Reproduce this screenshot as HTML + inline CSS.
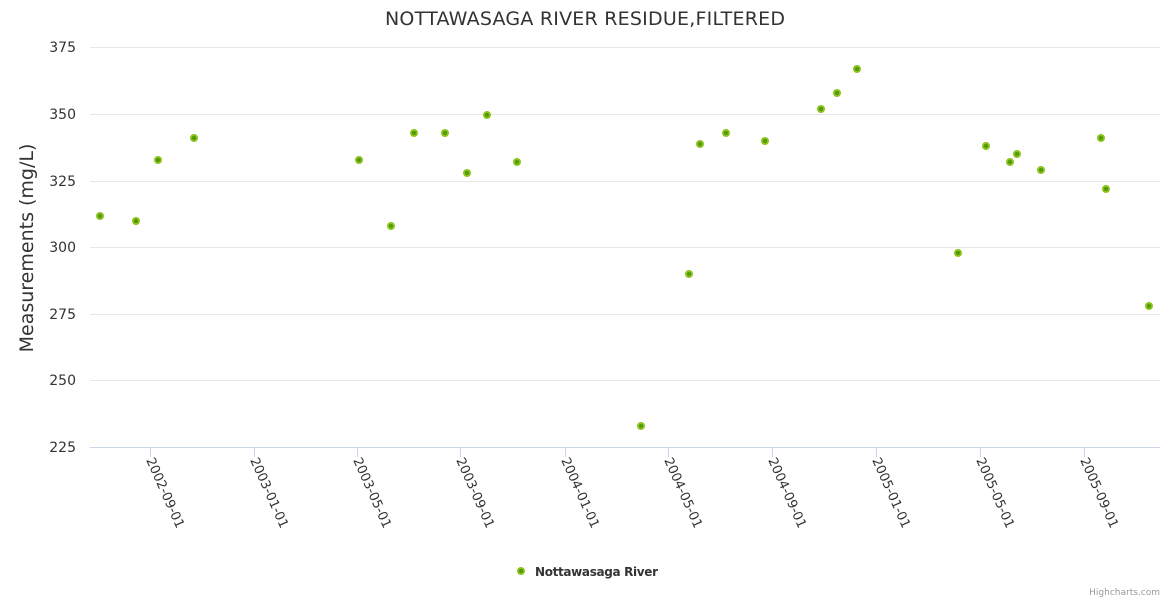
<!DOCTYPE html>
<html><head><meta charset="utf-8"><style>body{margin:0;background:#fff}svg{display:block}</style></head>
<body>
<svg width="1170" height="600" xmlns="http://www.w3.org/2000/svg" font-family="'DejaVu Sans','Liberation Sans',sans-serif">
<text x="585" y="25" text-anchor="middle" font-size="19" textLength="400" fill="#333">NOTTAWASAGA RIVER RESIDUE,FILTERED</text>
<g stroke="#e6e6e6" stroke-width="1">
<line x1="90" x2="1160" y1="47.5" y2="47.5"/><line x1="90" x2="1160" y1="114.5" y2="114.5"/>
<line x1="90" x2="1160" y1="181.5" y2="181.5"/><line x1="90" x2="1160" y1="247.5" y2="247.5"/>
<line x1="90" x2="1160" y1="314.5" y2="314.5"/><line x1="90" x2="1160" y1="380.5" y2="380.5"/>
</g>
<line x1="90" x2="1160" y1="447.5" y2="447.5" stroke="#ccd6eb"/>
<g stroke="#ccd6eb"><line x1="150.5" x2="150.5" y1="447" y2="457"/><line x1="254.5" x2="254.5" y1="447" y2="457"/><line x1="357.5" x2="357.5" y1="447" y2="457"/><line x1="460.5" x2="460.5" y1="447" y2="457"/><line x1="565.5" x2="565.5" y1="447" y2="457"/><line x1="668.5" x2="668.5" y1="447" y2="457"/><line x1="772.5" x2="772.5" y1="447" y2="457"/><line x1="876.5" x2="876.5" y1="447" y2="457"/><line x1="980.5" x2="980.5" y1="447" y2="457"/><line x1="1084.5" x2="1084.5" y1="447" y2="457"/></g>
<g font-size="14" fill="#333" text-anchor="end">
<text x="76" y="52">375</text><text x="76" y="119">350</text><text x="76" y="186">325</text><text x="76" y="252">300</text><text x="76" y="319">275</text><text x="76" y="385">250</text><text x="76" y="452">225</text>
</g>
<text transform="translate(33,248) rotate(-90)" text-anchor="middle" font-size="19" fill="#333">Measurements (mg/L)</text>
<g font-size="13" fill="#333">
<text transform="translate(146,460) rotate(66)">2002-09-01</text>
<text transform="translate(250,460) rotate(66)">2003-01-01</text>
<text transform="translate(353,460) rotate(66)">2003-05-01</text>
<text transform="translate(456,460) rotate(66)">2003-09-01</text>
<text transform="translate(561,460) rotate(66)">2004-01-01</text>
<text transform="translate(664,460) rotate(66)">2004-05-01</text>
<text transform="translate(768,460) rotate(66)">2004-09-01</text>
<text transform="translate(872,460) rotate(66)">2005-01-01</text>
<text transform="translate(976,460) rotate(66)">2005-05-01</text>
<text transform="translate(1080,460) rotate(66)">2005-09-01</text>
</g>
<g fill="#4f9a00" stroke="#8cc21e" stroke-width="2">
<circle cx="100" cy="216" r="3"/><circle cx="136" cy="221" r="3"/><circle cx="158" cy="160" r="3"/><circle cx="194" cy="138" r="3"/><circle cx="359" cy="160" r="3"/><circle cx="391" cy="226" r="3"/><circle cx="414" cy="133" r="3"/><circle cx="445" cy="133" r="3"/><circle cx="467" cy="173" r="3"/><circle cx="487" cy="115" r="3"/><circle cx="517" cy="162" r="3"/><circle cx="641" cy="426" r="3"/><circle cx="689" cy="274" r="3"/><circle cx="700" cy="144" r="3"/><circle cx="726" cy="133" r="3"/><circle cx="765" cy="141" r="3"/><circle cx="821" cy="109" r="3"/><circle cx="837" cy="93" r="3"/><circle cx="857" cy="69" r="3"/><circle cx="958" cy="253" r="3"/><circle cx="986" cy="146" r="3"/><circle cx="1010" cy="162" r="3"/><circle cx="1017" cy="154" r="3"/><circle cx="1041" cy="170" r="3"/><circle cx="1101" cy="138" r="3"/><circle cx="1106" cy="189" r="3"/><circle cx="1149" cy="306" r="3"/>
<circle cx="521" cy="571" r="3"/>
</g>
<text x="535" y="576" font-size="12" font-weight="bold" textLength="123" fill="#333">Nottawasaga River</text>
<text x="1160" y="595" text-anchor="end" font-size="9" fill="#999">Highcharts.com</text>
</svg>
</body></html>
